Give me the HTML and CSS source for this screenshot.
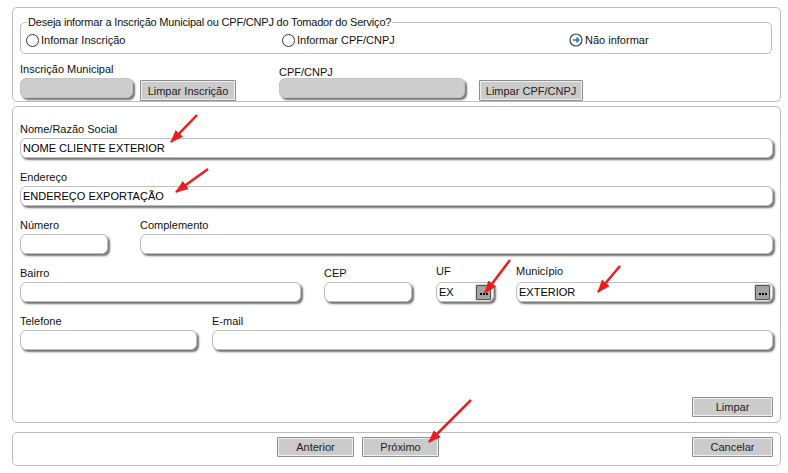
FILE: index.html
```html
<!DOCTYPE html>
<html lang="pt-BR">
<head>
    <meta charset="UTF-8">
    <title>Tomador do Serviço</title>
    <link rel="stylesheet" href="styles.css">
</head>
<body>
    <div class="panel panel-id">
        <fieldset class="choice">
            <legend>Deseja informar a Inscrição Municipal ou CPF/CNPJ do Tomador do Serviço?</legend>
            <div class="options">
                <label class="option"><span class="radio"></span>Infomar Inscrição</label>
                <label class="option"><span class="radio"></span>Informar CPF/CNPJ</label>
                <label class="option">
                    <svg class="go" width="14" height="14" viewBox="0 0 14 14">
                        <circle cx="7" cy="7" r="6" fill="#fff" stroke="#444" stroke-width="1.2"/>
                        <path d="M3.8 7 H9.6 M7.4 4.6 L9.8 7 L7.4 9.4" fill="none" stroke="#1a7fd4" stroke-width="1.6"/>
                    </svg>Não informar
                </label>
            </div>
        </fieldset>
        <div class="id-row">
            <div class="id-group">
                <label>Inscrição Municipal</label>
                <div class="id-line">
                    <input class="field disabled w-im" type="text" disabled>
                    <button class="btn w-li">Limpar Inscrição</button>
                </div>
            </div>
            <div class="id-group cpf">
                <label>CPF/CNPJ</label>
                <div class="id-line wide">
                    <input class="field disabled w-cpf" type="text" disabled>
                    <button class="btn w-lc">Limpar CPF/CNPJ</button>
                </div>
            </div>
        </div>
    </div>

    <div class="panel panel-form">
        <div class="row">
            <div class="item grow">
                <label>Nome/Razão Social</label>
                <input class="field" type="text" value="NOME CLIENTE EXTERIOR">
            </div>
        </div>
        <div class="row">
            <div class="item grow">
                <label>Endereço</label>
                <input class="field" type="text" value="ENDEREÇO EXPORTAÇÃO">
            </div>
        </div>
        <div class="row">
            <div class="item w-num">
                <label>Número</label>
                <input class="field" type="text">
            </div>
            <div class="item grow gap-32">
                <label>Complemento</label>
                <input class="field" type="text">
            </div>
        </div>
        <div class="row">
            <div class="item w-bairro">
                <label>Bairro</label>
                <input class="field" type="text">
            </div>
            <div class="item w-cep gap-23">
                <label>CEP</label>
                <input class="field" type="text">
            </div>
            <div class="item w-uf gap-24">
                <label class="up">UF</label>
                <div class="field lookup">
                    <input type="text" value="EX">
                    <button class="dots"><span></span><span></span><span></span></button>
                </div>
            </div>
            <div class="item grow gap-22">
                <label class="up">Município</label>
                <div class="field lookup">
                    <input type="text" value="EXTERIOR">
                    <button class="dots"><span></span><span></span><span></span></button>
                </div>
            </div>
        </div>
        <div class="row">
            <div class="item w-tel">
                <label>Telefone</label>
                <input class="field" type="text">
            </div>
            <div class="item grow gap-15">
                <label>E-mail</label>
                <input class="field" type="text">
            </div>
        </div>
        <div class="form-actions">
            <button class="btn w-81">Limpar</button>
        </div>
    </div>

    <div class="panel panel-nav">
        <button class="btn w-77 prev">Anterior</button>
        <button class="btn w-77">Próximo</button>
        <button class="btn w-81 cancel">Cancelar</button>
    </div>

    <!-- annotation arrows -->
    <svg class="marks" width="788" height="473" viewBox="0 0 788 473">
        <defs>
            <marker id="head" markerUnits="userSpaceOnUse" markerWidth="13" markerHeight="10" refX="12" refY="5" orient="auto">
                <path d="M0 0 L13 5 L0 10 Z" fill="#ee1c1c"/>
            </marker>
        </defs>
        <g stroke="#ee1c1c" stroke-width="2.5" marker-end="url(#head)">
            <line x1="197" y1="115" x2="171" y2="142"/>
            <line x1="208" y1="169" x2="176" y2="192"/>
            <line x1="510" y1="260" x2="485" y2="293"/>
            <line x1="620" y1="266" x2="598" y2="292"/>
            <line x1="471" y1="400" x2="429" y2="442"/>
        </g>
    </svg>
</body>
</html>
```

FILE: styles.css
```css
body {
    margin: 0;
    padding: 7px 0 0 12px;
    font-family: "Liberation Sans", Arial, sans-serif;
    font-size: 11px;
    color: #111;
    background: #fff;
    position: relative;
    width: 788px;
    height: 473px;
    box-sizing: border-box;
    overflow: hidden;
}

.panel {
    width: 769px;
    box-sizing: border-box;
    border: 1px solid #bdbdbd;
    border-radius: 5px;
}

/* top: which document to inform */
.panel-id {
    height: 95px;
    padding: 7px 8px 0 7px;
}

.choice {
    margin: 0;
    padding: 0 5px 5px 5px;
    border: 1px solid #bdbdbd;
    border-radius: 5px;
    min-width: 0;
}

.choice legend {
    padding: 0 1px;
    line-height: 14px;
    margin-left: 1px;
    letter-spacing: -0.2px;
}

.options {
    display: grid;
    grid-template-columns: 256px 287px auto;
    height: 16px;
    align-items: center;
    margin-top: 3px;
}

.option {
    display: flex;
    align-items: center;
}

.radio {
    width: 11px;
    height: 11px;
    border: 1px solid #333;
    border-radius: 50%;
    margin-right: 2px;
    background: #fff;
}

.go {
    margin-right: 2px;
}

.id-row {
    display: flex;
    margin-top: 8px;
}

.id-group label {
    display: block;
    line-height: 14px;
    height: 14px;
}

.id-group.cpf {
    margin-left: 43px;
}

.id-group.cpf label {
    margin-top: 3px;
    margin-bottom: -3px;
}

.id-line {
    display: flex;
    align-items: flex-start;
    gap: 7px;
    margin-top: 2px;
}

.id-line.wide {
    gap: 14px;
}

.id-line .btn {
    margin-top: 2px;
    height: 21px;
}

/* inputs */
.field {
    display: block;
    height: 20px;
    box-sizing: border-box;
    border: 1px solid #bdbdbd;
    border-radius: 6px;
    background: #fff;
    box-shadow: 2px 2px 2px rgba(0, 0, 0, 0.55);
    font-family: inherit;
    font-size: 11px;
    color: #000;
    padding: 0 2px;
    width: 100%;
    outline: none;
}

.field.disabled {
    background: #cdcdcd;
    border-color: #c4c4c4;
}

.w-im { width: 113px; }
.w-cpf { width: 186px; }
.w-li { width: 96px; }
.w-lc { width: 104px; }
.w-77 { width: 77px; }
.w-81 { width: 81px; }

.lookup {
    display: flex;
    align-items: center;
    padding: 0 1px 0 2px;
}

.lookup input {
    flex: 1;
    min-width: 0;
    border: none;
    background: transparent;
    font-family: inherit;
    font-size: 11px;
    color: #000;
    padding: 0;
    outline: none;
}

.dots {
    width: 17px;
    height: 17px;
    padding: 4px 0 0;
    border: 1px solid #dcdcdc;
    box-shadow: inset 0 0 0 1px #555;
    background: #a3a3a3;
    border-radius: 2px;
    display: flex;
    justify-content: center;
    align-items: center;
    gap: 1px;
}

.dots span {
    width: 2px;
    height: 2px;
    background: #000;
}

/* main form */
.panel-form {
    margin-top: 4px;
    height: 317px;
    padding: 15px 7px 5px 7px;
    display: flex;
    flex-direction: column;
}

.row {
    display: flex;
    margin-bottom: 12px;
}

.item label {
    display: block;
    line-height: 14px;
    height: 14px;
    margin-bottom: 2px;
}

.item label.up {
    margin-top: -2px;
    margin-bottom: 4px;
}

.grow { flex: 1; }
.w-num { width: 88px; }
.w-bairro { width: 281px; }
.w-cep { width: 88px; }
.w-uf { width: 58px; }
.w-tel { width: 177px; }
.gap-32 { margin-left: 32px; }
.gap-23 { margin-left: 23px; }
.gap-24 { margin-left: 24px; }
.gap-22 { margin-left: 22px; }
.gap-15 { margin-left: 15px; }

.form-actions {
    margin-top: auto;
    display: flex;
    justify-content: flex-end;
}

/* buttons */
.btn {
    height: 20px;
    box-sizing: border-box;
    border: 1px solid #8e8e8e;
    box-shadow: inset 0 0 0 1px #efefef;
    background: #cbcbcb;
    font-family: inherit;
    font-size: 11px;
    color: #222;
    padding: 0;
    border-radius: 1px;
}

/* bottom navigation */
.panel-nav {
    margin-top: 9px;
    height: 34px;
    padding: 4px 7px;
    display: flex;
}

.panel-nav .prev {
    margin-left: 257px;
    margin-right: 8px;
}

.panel-nav .cancel {
    margin-left: auto;
}

.marks {
    position: absolute;
    left: 0;
    top: 0;
    pointer-events: none;
}
```
